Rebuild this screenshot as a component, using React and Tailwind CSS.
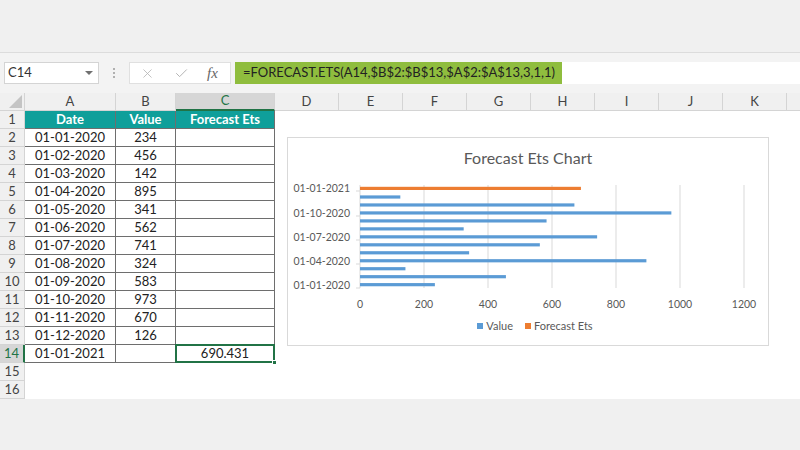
import { X, Check } from 'lucide-react';

const rows = [
  ['01-01-2020', 234],
  ['01-02-2020', 456],
  ['01-03-2020', 142],
  ['01-04-2020', 895],
  ['01-05-2020', 341],
  ['01-06-2020', 562],
  ['01-07-2020', 741],
  ['01-08-2020', 324],
  ['01-09-2020', 583],
  ['01-10-2020', 973],
  ['01-11-2020', 670],
  ['01-12-2020', 126],
];

const otherCols = ['D', 'E', 'F', 'G', 'H', 'I', 'J', 'K'];

const ColHeader = ({ label, w, active }) => (
  <div
    className={`${w} h-full flex items-center justify-center border-r border-[#d4d4d4] ${
      active ? 'bg-[#d6d6d6] text-[#217346] border-b-2 border-b-[#217346]' : 'text-[#444] border-b border-b-[#d4d4d4]'
    }`}
  >
    {label}
  </div>
);

const RowHeader = ({ n, active }) => (
  <div
    className={`w-[25px] shrink-0 h-full flex items-center justify-center border-b border-[#d4d4d4] ${
      active ? 'bg-[#d6d6d6] text-[#217346] border-r-2 border-r-[#217346]' : 'bg-[#f0f0f0] text-[#444] border-r border-r-[#d4d4d4]'
    }`}
  >
    {n}
  </div>
);

const Cell = ({ w, children, className = '' }) => (
  <div className={`${w} h-full flex items-center justify-center border-r border-b border-[#6e6e6e] ${className}`}>
    {children}
  </div>
);

const Chart = () => {
  // values top to bottom as drawn (Dec -> Jan)
  const blue = [126, 670, 973, 583, 324, 741, 562, 341, 895, 142, 456, 234];
  const sx = 0.32;
  const ax = 72;
  return (
    <div className="absolute left-[287px] top-[44px] w-[482px] h-[209px] bg-white border border-[#d9d9d9] flex flex-col">
      <div className="h-[40px] pt-[10px] text-center text-[16px] leading-[20px] text-[#595959]">Forecast Ets Chart</div>
      <svg width="480" height="140" className="block">
        {[1, 2, 3, 4, 5, 6].map(i => (
          <line key={i} x1={ax + i * 64} y1="7" x2={ax + i * 64} y2="110" stroke="#d9d9d9" strokeWidth="1" />
        ))}
        <line x1={ax} y1="7" x2={ax} y2="110" stroke="#d9d9d9" strokeWidth="1" />
        {[13, 38, 62, 86, 110].map(y => (
          <line key={y} x1={ax - 4} y1={y} x2={ax} y2={y} stroke="#d9d9d9" strokeWidth="1" />
        ))}
        <rect x={ax} y="8.8" width={690.431 * sx} height="3.2" fill="#ed7d31" />
        {blue.map((v, i) => (
          <rect key={i} x={ax} y={17.4 + i * 7.97} width={v * sx} height="3.2" fill="#5b9bd5" />
        ))}
        {[
          ['01-01-2021', 10],
          ['01-10-2020', 35],
          ['01-07-2020', 59],
          ['01-04-2020', 83],
          ['01-01-2020', 107],
        ].map(([t, y]) => (
          <text key={t} x="62" y={y + 4} textAnchor="end" fontSize="10.5" fill="#595959">
            {t}
          </text>
        ))}
        {[0, 200, 400, 600, 800, 1000, 1200].map((t, i) => (
          <text key={t} x={ax + i * 64} y="130" textAnchor="middle" fontSize="10.5" fill="#595959">
            {t}
          </text>
        ))}
      </svg>
      <div className="flex justify-center items-center gap-[12px] pl-[14px] text-[11px] text-[#595959]">
        <div className="flex items-center gap-[3px]">
          <span className="w-[6px] h-[6px] bg-[#5b9bd5]" />
          Value
        </div>
        <div className="flex items-center gap-[3px]">
          <span className="w-[6px] h-[6px] bg-[#ed7d31]" />
          Forecast Ets
        </div>
      </div>
    </div>
  );
};

const App = () => {
  return (
    <div className="w-[800px] h-[450px] bg-[#f0f0f0] flex flex-col overflow-hidden font-['Lato',sans-serif] text-[12.5px]">
      {/* ribbon strip */}
      <div className="h-[53px] shrink-0 border-b border-[#dcdcdc]" />

      {/* formula bar */}
      <div className="h-[40px] shrink-0 flex items-center bg-[#f3f3f3]">
        <div className="ml-[4px] w-[95px] h-[22px] bg-white border border-[#d4d4d4] flex items-center justify-between pl-[3px] pr-[5px] text-[13px] text-[#333]">
          <span>C14</span>
          <span className="w-0 h-0 border-l-[4px] border-r-[4px] border-t-[4px] border-l-transparent border-r-transparent border-t-[#707070]" />
        </div>
        <div className="w-[30px] flex flex-col items-center gap-[2px]">
          <span className="w-[2px] h-[2px] bg-[#b0b0b0]" />
          <span className="w-[2px] h-[2px] bg-[#b0b0b0]" />
          <span className="w-[2px] h-[2px] bg-[#b0b0b0]" />
        </div>
        <div className="w-[102px] h-[22px] bg-white border border-[#e0e0e0] flex items-center pl-[10px]">
          <X size={15} strokeWidth={1.3} className="text-[#b4b4b4]" />
          <Check size={15} strokeWidth={1.6} className="text-[#b4b4b4] ml-[19px]" />
          <span className="ml-[18px] text-[15px] italic text-[#666] font-['Liberation_Serif',serif]">fx</span>
        </div>
        <div className="ml-[4px] flex-1 h-[22px] bg-white flex items-center">
          <div className="h-full bg-[#8fbd3e] flex items-center pl-[8px] pr-[6px] w-[327px] text-[13px] text-[#222] whitespace-nowrap">
            =FORECAST.ETS(A14,$B$2:$B$13,$A$2:$A$13,3,1,1)
          </div>
        </div>
      </div>

      {/* sheet */}
      <div className="relative bg-white flex flex-col">
        <div className="h-[18px] flex bg-[#f0f0f0] text-[13px]">
          <div className="w-[25px] h-full border-r border-b border-[#d4d4d4] flex items-end justify-end pr-[2px] pb-[2px]">
            <svg width="13" height="13">
              <polygon points="13,0 13,13 0,13" fill="#c4c4c4" />
            </svg>
          </div>
          <ColHeader label="A" w="w-[91px]" />
          <ColHeader label="B" w="w-[60px]" />
          <ColHeader label="C" w="w-[99px]" active />
          {otherCols.map(c => (
            <ColHeader key={c} label={c} w="w-[64px]" />
          ))}
          <div className="flex-1 h-full border-b border-[#d4d4d4]" />
        </div>

        <div className="h-[18px] flex text-[13px]">
          <RowHeader n={1} />
          <Cell w="w-[91px]" className="bg-[#0f9f9a] text-white font-bold">Date</Cell>
          <Cell w="w-[60px]" className="bg-[#0f9f9a] text-white font-bold">Value</Cell>
          <Cell w="w-[99px]" className="bg-[#0f9f9a] text-white font-bold">Forecast Ets</Cell>
        </div>

        {rows.map(([d, v], i) => (
          <div key={d} className="h-[18px] flex text-[13px] text-[#222]">
            <RowHeader n={i + 2} />
            <Cell w="w-[91px]">{d}</Cell>
            <Cell w="w-[60px]">{v}</Cell>
            <Cell w="w-[99px]" />
          </div>
        ))}

        <div className="h-[18px] flex text-[13px] text-[#222]">
          <RowHeader n={14} active />
          <Cell w="w-[91px]">01-01-2021</Cell>
          <Cell w="w-[60px]" />
          <Cell w="w-[99px]" className="relative">
            <div className="absolute -left-[1px] -top-[1px] w-[100px] h-[19px] border-2 border-[#217346]" />
            <span className="w-[5px] h-[5px] bg-[#217346] border border-white absolute -right-[3px] -bottom-[3px]" />
            690.431
          </Cell>
        </div>

        {[15, 16].map(n => (
          <div key={n} className="h-[18px] flex text-[13px]">
            <RowHeader n={n} />
          </div>
        ))}

        <Chart />
      </div>
    </div>
  );
};

export default App;
